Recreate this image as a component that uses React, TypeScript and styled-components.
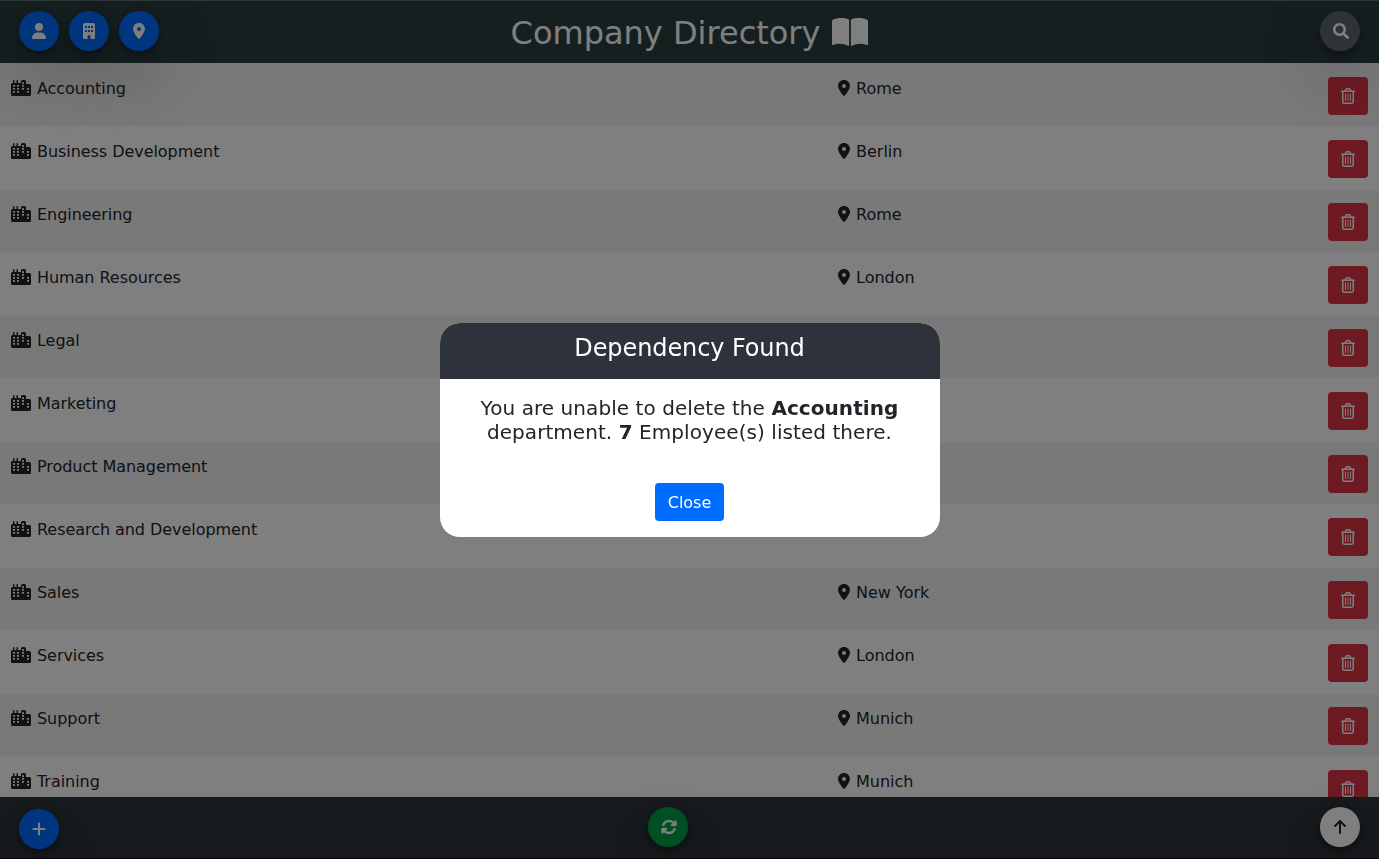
import React from 'react';
import styled, { createGlobalStyle } from 'styled-components';
import { FaUser, FaLocationDot, FaPlus, FaArrowsRotate, FaArrowUp } from 'react-icons/fa6';
import { FaSearch } from 'react-icons/fa';

const Global = createGlobalStyle`
  *, *::before, *::after { box-sizing: border-box; }
  body {
    margin: 0;
    height: 859px;
    overflow: hidden;
    font-family: Verdana, 'DejaVu Sans', sans-serif;
    font-size: 16px;
    line-height: 1.5;
    color: #212529;
    background: #fff;
  }
  svg { display: block; flex: none; }
`;

const Page = styled.div`
  display: flex;
  flex-direction: column;
  height: 859px;
`;

const Bar = styled.header`
  display: grid;
  grid-template-columns: 1fr auto 1fr;
  height: 63px;
  flex: none;
  padding: 10px 19px 0;
  border-top: 1px solid #5c7072;
  background: #2c3e40;
  position: relative;
  z-index: 1;
`;

const Footer = styled.footer`
  display: flex;
  justify-content: space-between;
  align-items: flex-start;
  height: 62px;
  flex: none;
  padding: 10px 19px 0;
  border-bottom: 1px solid #1e0f18;
  background: #2e353a;
  position: relative;
  z-index: 1;
`;

const Group = styled.div<{ $end?: boolean }>`
  display: flex;
  gap: 10px;
  justify-content: ${(p) => (p.$end ? 'flex-end' : 'flex-start')};
`;

const Title = styled.h1`
  display: flex;
  gap: 12px;
  margin: 3px 0 0;
  font-size: 32px;
  font-weight: 400;
  line-height: 38px;
  white-space: nowrap;
  color: #fff;
`;

const BookIcon = styled.svg`
  width: 36px;
  height: 28px;
  margin-top: 4px;
`;

const RoundButton = styled.button<{ $bg: string; $fg?: string; $drop?: number; $shift?: number; $nudge?: number }>`
  display: flex;
  align-items: center;
  justify-content: center;
  width: 40px;
  height: 40px;
  padding: 0 0 0 ${(p) => p.$nudge ?? 0}px;
  margin-top: ${(p) => p.$drop ?? 0}px;
  margin-right: ${(p) => p.$shift ?? 0}px;
  border: 0;
  border-radius: 50%;
  background: ${(p) => p.$bg};
  color: ${(p) => p.$fg ?? '#fff'};
  box-shadow: 0 4px 10px rgba(0, 0, 0, 0.4), 0 26px 64px rgba(0, 0, 0, 0.32);
`;

const List = styled.main`
  flex: 1;
  min-height: 0;
  overflow: hidden;
  padding-top: 1px;
  background: #f2f2f2;
`;

const Row = styled.div`
  display: grid;
  grid-template-columns: 827px 1fr 40px;
  align-items: start;
  height: 63px;
  padding: 13px 11px 0;
  background: #fff;
  border-bottom: 1px solid #fff;
  &:nth-child(odd) { background: #f2f2f2; }
`;

const Cell = styled.div<{ $spacing?: number }>`
  display: flex;
  align-items: center;
  gap: 6px;
  height: 24px;
  margin-top: -1px;
  letter-spacing: ${(p) => p.$spacing ?? 0}px;
  white-space: nowrap;
`;

const Label = styled.span`
  padding-top: 2px;
`;

const CityIcon = styled.svg`
  width: 20px;
  height: 16px;
`;

const BuildingIcon = styled.svg`
  width: 12px;
  height: 16px;
`;

const TrashIcon = styled.svg`
  width: 14px;
  height: 16px;
`;

const PinIcon = styled(FaLocationDot)`
  width: 12px;
  height: 16px;
`;

const RotateIcon = styled(FaArrowsRotate)`
  width: 16px;
  height: 16px;
  stroke: currentColor;
  stroke-width: 12px;
`;

const DeleteButton = styled.button`
  display: flex;
  align-items: center;
  justify-content: center;
  width: 40px;
  height: 38px;
  padding: 0;
  border: 0;
  border-radius: 4px;
  background: #dc3545;
  color: #fff;
`;

const Overlay = styled.div`
  position: fixed;
  inset: 0;
  z-index: 2;
  display: flex;
  align-items: center;
  justify-content: center;
  padding-top: 1px;
  background: rgba(0, 0, 0, 0.5);
`;

const Dialog = styled.section`
  display: flex;
  flex-direction: column;
  width: 500px;
  height: 214px;
  margin-left: 1px;
  border-radius: 20px;
  overflow: hidden;
  background: #fff;
  text-align: center;
`;

const DialogTitle = styled.h2`
  height: 56px;
  margin: 0;
  padding: 7px 1px 0 0;
  font-size: 24px;
  font-weight: 400;
  line-height: 37px;
  letter-spacing: -0.1px;
  background: #2e333b;
  color: #fff;
`;

const Message = styled.p`
  margin: 17px 1px 39px 0;
  font-size: 20px;
  line-height: 24px;
  letter-spacing: 0.06px;
`;

const CloseButton = styled.button`
  align-self: center;
  width: 69px;
  height: 38px;
  margin-right: 1px;
  padding: 2px 0 0;
  border: 0;
  border-radius: 4px;
  background: #006bff;
  color: #fff;
  font: inherit;
`;

const departments = [
  ['Accounting', 'Rome'],
  ['Business Development', 'Berlin'],
  ['Engineering', 'Rome'],
  ['Human Resources', 'London'],
  ['Legal', 'London'],
  ['Marketing', 'New York'],
  ['Product Management', 'London'],
  ['Research and Development', 'Paris'],
  ['Sales', 'New York'],
  ['Services', 'London'],
  ['Support', 'Munich'],
  ['Training', 'Munich'],
];

const City = () => (
  <CityIcon viewBox="0 0 20 16" fill="currentColor">
    <path
      fillRule="evenodd"
      d="M2 .75a.75.75 0 0 1 1.5 0V3H5.500V.75a.75.75 0 0 1 1.500 0V3H10V1.500A1.500 1.500 0 0 1 11.500 0h2A1.500 1.500 0 0 1 15 1.500V4h3.500A1.500 1.500 0 0 1 20 5.500v9a1.500 1.500 0 0 1-1.500 1.500h-17A1.500 1.500 0 0 1 0 14.500v-10A1.500 1.500 0 0 1 1.500 3H2z
      M2 5v1.800h2V5z M6 5v1.800h2V5z M2 8v1.800h2V8z M6 8v1.800h2V8z M2 11v1.800h2V11z M6 11v1.800h2V11z
      M11 2.200V4h2V2.200z M11 5v1.800h2V5z M11 8v1.800h2V8z M16 8v1.800h2V8z M16 11v1.800h2V11z"
    />
  </CityIcon>
);

const Building = () => (
  <BuildingIcon viewBox="0 0 12 16" fill="currentColor">
    <path
      fillRule="evenodd"
      d="M1.500 0h9A1.500 1.500 0 0 1 12 1.500v13a1.500 1.500 0 0 1-1.500 1.500H7.500v-2.500a1.500 1.500 0 0 0-3 0V16H1.500A1.500 1.500 0 0 1 0 14.500v-13A1.500 1.500 0 0 1 1.500 0z
      M2 3v2h2V3z M5 3v2h2V3z M8 3v2h2V3z M2 7v2h2V7z M5 7v2h2V7z M8 7v2h2V7z"
    />
  </BuildingIcon>
);

const Trash = () => (
  <TrashIcon viewBox="0 0 14 16" fill="none" stroke="currentColor" strokeWidth="1.500" strokeLinecap="round">
    <path d="M.75 3.250h12.500M3.900 3L5 1.300Q5.300.75 5.900.75h2.200q.6 0 .9.550L10.100 3" />
    <path d="M1.750 3.500V13.500A1.750 1.750 0 0 0 3.500 15.250h7A1.750 1.750 0 0 0 12.250 13.500V3.500" />
    <path strokeWidth="1" d="M4.500 6v6.500M7 6v6.500M9.500 6v6.500" />
  </TrashIcon>
);

const Book = () => (
  <BookIcon viewBox="0 0 36 28" fill="currentColor">
    <path d="M9 0C5.800 0 3 .7 1.100 1.600Q0 2.100 0 3.200V26.200Q0 27.300 1.100 26.900C6.500 24.700 12.300 25.600 15.800 27.700Q17.100 28.300 17.100 27V2.200Q17.100 1.600 16.500 1.300C14.500.4 12 0 9 0z" />
    <path d="M27 0c3.200 0 6 .7 7.900 1.600Q36 2.100 36 3.200V26.200Q36 27.300 34.900 26.900C29.500 24.700 23.700 25.600 20.200 27.700Q18.900 28.300 18.900 27V2.200Q18.900 1.600 19.500 1.300C21.500.4 24 0 27 0z" />
  </BookIcon>
);

export default function App() {
  return (
    <>
      <Global />
      <Page>
        <Bar>
          <Group>
            <RoundButton $bg="#006bff"><FaUser size={16} /></RoundButton>
            <RoundButton $bg="#006bff"><Building /></RoundButton>
            <RoundButton $bg="#006bff"><FaLocationDot size={16} /></RoundButton>
          </Group>
          <Title>Company Directory <Book /></Title>
          <Group $end>
            <RoundButton $bg="#5f666c" $nudge={2}><FaSearch size={16} /></RoundButton>
          </Group>
        </Bar>
        <List>
          {departments.map(([name, place]) => (
            <Row key={name}>
              <Cell $spacing={-0.05}><City /><Label>{name}</Label></Cell>
              <Cell><PinIcon /><Label>{place}</Label></Cell>
              <DeleteButton><Trash /></DeleteButton>
            </Row>
          ))}
        </List>
        <Footer>
          <RoundButton $bg="#006bff" $drop={2}><FaPlus size={16} /></RoundButton>
          <RoundButton $bg="#00a046" $shift={43} $nudge={2}><RotateIcon /></RoundButton>
          <RoundButton $bg="#fff" $fg="#212529"><FaArrowUp size={16} /></RoundButton>
        </Footer>
      </Page>
      <Overlay>
        <Dialog>
          <DialogTitle>Dependency Found</DialogTitle>
          <Message>
            You are unable to delete the <b>Accounting</b><br />
            department. <b>7</b> Employee(s) listed there.
          </Message>
          <CloseButton>Close</CloseButton>
        </Dialog>
      </Overlay>
    </>
  );
}
